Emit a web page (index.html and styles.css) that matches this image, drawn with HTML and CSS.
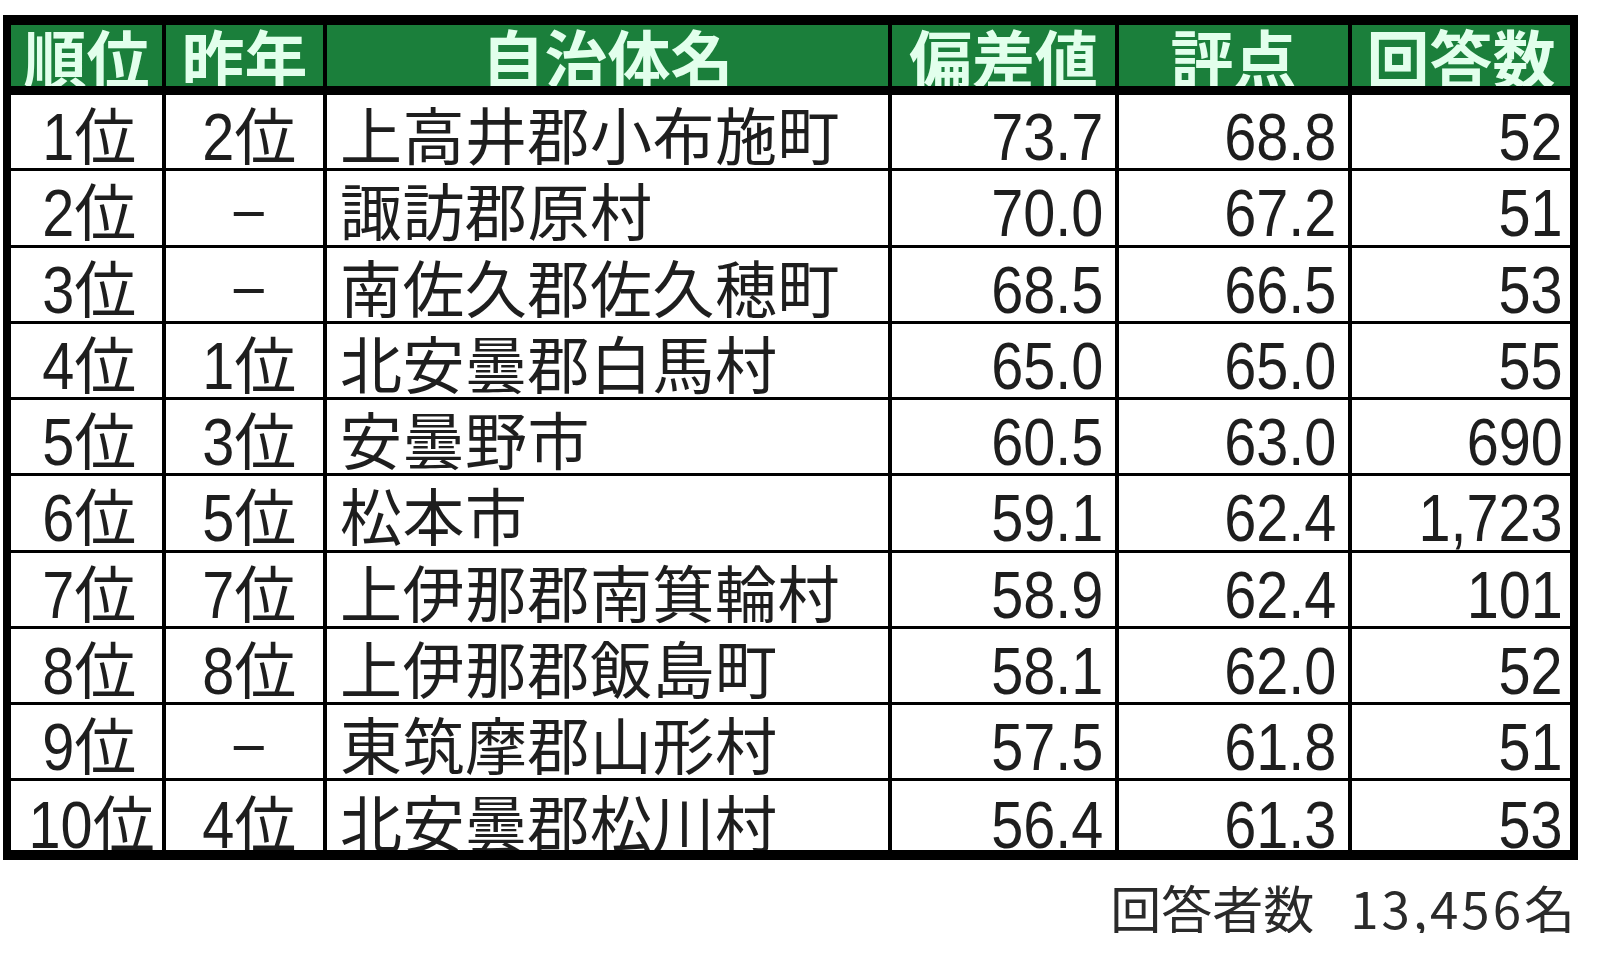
FILE: index.html
```html
<!DOCTYPE html>
<html lang="ja">
<head>
<meta charset="utf-8">
<title>ランキング</title>
<link rel="stylesheet" href="styles.css">
</head>
<body>
<div class="page">
  <table class="rank">
    <thead>
      <tr>
        <th class="c1">順位</th>
        <th class="c2">昨年</th>
        <th class="c3">自治体名</th>
        <th class="c4">偏差値</th>
        <th class="c5">評点</th>
        <th class="c6">回答数</th>
      </tr>
    </thead>
    <tbody>
      <tr><td class="rk"><span class="d">1</span>位</td><td class="prev"><span class="d">2</span>位</td><td class="name">上高井郡小布施町</td><td class="num"><span class="v">73.7</span></td><td class="num"><span class="v">68.8</span></td><td class="num cnt"><span class="v">52</span></td></tr>
      <tr><td class="rk"><span class="d">2</span>位</td><td class="prev"><span class="dash">–</span></td><td class="name">諏訪郡原村</td><td class="num"><span class="v">70.0</span></td><td class="num"><span class="v">67.2</span></td><td class="num cnt"><span class="v">51</span></td></tr>
      <tr><td class="rk"><span class="d">3</span>位</td><td class="prev"><span class="dash">–</span></td><td class="name">南佐久郡佐久穂町</td><td class="num"><span class="v">68.5</span></td><td class="num"><span class="v">66.5</span></td><td class="num cnt"><span class="v">53</span></td></tr>
      <tr><td class="rk"><span class="d">4</span>位</td><td class="prev"><span class="d">1</span>位</td><td class="name">北安曇郡白馬村</td><td class="num"><span class="v">65.0</span></td><td class="num"><span class="v">65.0</span></td><td class="num cnt"><span class="v">55</span></td></tr>
      <tr><td class="rk"><span class="d">5</span>位</td><td class="prev"><span class="d">3</span>位</td><td class="name">安曇野市</td><td class="num"><span class="v">60.5</span></td><td class="num"><span class="v">63.0</span></td><td class="num cnt"><span class="v">690</span></td></tr>
      <tr><td class="rk"><span class="d">6</span>位</td><td class="prev"><span class="d">5</span>位</td><td class="name">松本市</td><td class="num"><span class="v">59.1</span></td><td class="num"><span class="v">62.4</span></td><td class="num cnt"><span class="v">1,723</span></td></tr>
      <tr><td class="rk"><span class="d">7</span>位</td><td class="prev"><span class="d">7</span>位</td><td class="name">上伊那郡南箕輪村</td><td class="num"><span class="v">58.9</span></td><td class="num"><span class="v">62.4</span></td><td class="num cnt"><span class="v">101</span></td></tr>
      <tr><td class="rk"><span class="d">8</span>位</td><td class="prev"><span class="d">8</span>位</td><td class="name">上伊那郡飯島町</td><td class="num"><span class="v">58.1</span></td><td class="num"><span class="v">62.0</span></td><td class="num cnt"><span class="v">52</span></td></tr>
      <tr><td class="rk"><span class="d">9</span>位</td><td class="prev"><span class="dash">–</span></td><td class="name">東筑摩郡山形村</td><td class="num"><span class="v">57.5</span></td><td class="num"><span class="v">61.8</span></td><td class="num cnt"><span class="v">51</span></td></tr>
      <tr class="last"><td class="rk"><span class="d">10</span>位</td><td class="prev"><span class="d">4</span>位</td><td class="name">北安曇郡松川村</td><td class="num"><span class="v">56.4</span></td><td class="num"><span class="v">61.3</span></td><td class="num cnt"><span class="v">53</span></td></tr>
    </tbody>
  </table>
  <p class="total"><span class="label">回答者数</span><span class="n">13,456名</span></p>
</div>
</body>
</html>
```

FILE: styles.css
```css
* {
  box-sizing: border-box;
}

body {
  margin: 0;
  background: #ffffff;
}

.page {
  width: 1578px;
  padding: 15px 0 0 3px;
}

.rank {
  width: 1575px;
  table-layout: fixed;
  border-collapse: separate;
  border-spacing: 0;
  border: 8px solid #000;
  border-top-width: 10px;
  border-bottom-width: 10px;
}

.rank th {
  height: 70px;
  padding: 1px 0 0 0;
  background: #1b7f3b;
  color: #e2ffec;
  font: 700 63px/60px "Noto Sans CJK JP", sans-serif;
  text-align: center;
  vertical-align: top;
  white-space: nowrap;
  overflow: hidden;
  border-right: 4px solid #000;
  border-bottom: 9px solid #000;
}

.rank th.c1 { width: 155px; }
.rank th.c2 { width: 161px; }
.rank th.c3 { width: 565px; }
.rank th.c4 { width: 227px; }
.rank th.c5 { width: 233px; }
.rank th.c6 { width: 218px; border-right: 0; }

.rank td {
  height: 76.25px;
  padding: 13px 0 0 0;
  color: #1e1e1e;
  font: 400 62px/50px "Noto Sans CJK JP", sans-serif;
  vertical-align: top;
  white-space: nowrap;
  overflow: hidden;
  border-right: 4px solid #000;
  border-bottom: 3px solid #000;
}

.rank td.cnt {
  border-right: 0;
}

.rank tr.last td {
  height: 68.5px;
  border-bottom: 0;
  padding-top: 15px;
}

.rank tr.last td.num {
  padding-top: 19px;
}

.rank td.rk {
  text-align: center;
  padding-left: 5px;
}

.rank td.prev {
  text-align: center;
  padding-left: 9px;
}

.rank td.name {
  text-align: left;
  padding-left: 13px;
  letter-spacing: 0.5px;
}

.rank td.num {
  text-align: right;
  padding-top: 17px;
  padding-right: 12px;
  font: 400 67px/50px "Liberation Sans", "Arial", sans-serif;
}

.rank td.cnt {
  padding-right: 7px;
}

.v {
  display: inline-block;
  transform: scaleX(0.86);
  transform-origin: 100% 50%;
}

.d {
  display: inline-block;
  margin-left: -5px;
  font: 400 67px/50px "Liberation Sans", "Arial", sans-serif;
  transform: scaleX(0.86);
  transform-origin: 100% 50%;
}

.dash {
  display: inline-block;
  font: 400 60px/50px "Liberation Sans", "Arial", sans-serif;
  transform: scaleX(0.9);
  vertical-align: 9px;
}

.total {
  display: flex;
  justify-content: flex-end;
  gap: 36px;
  margin: 22px 0 0;
  padding-right: 0;
  color: #2a2a2a;
  font: 400 51px/51px "Noto Sans CJK JP", sans-serif;
}

.total .n {
  letter-spacing: 3px;
}
```
